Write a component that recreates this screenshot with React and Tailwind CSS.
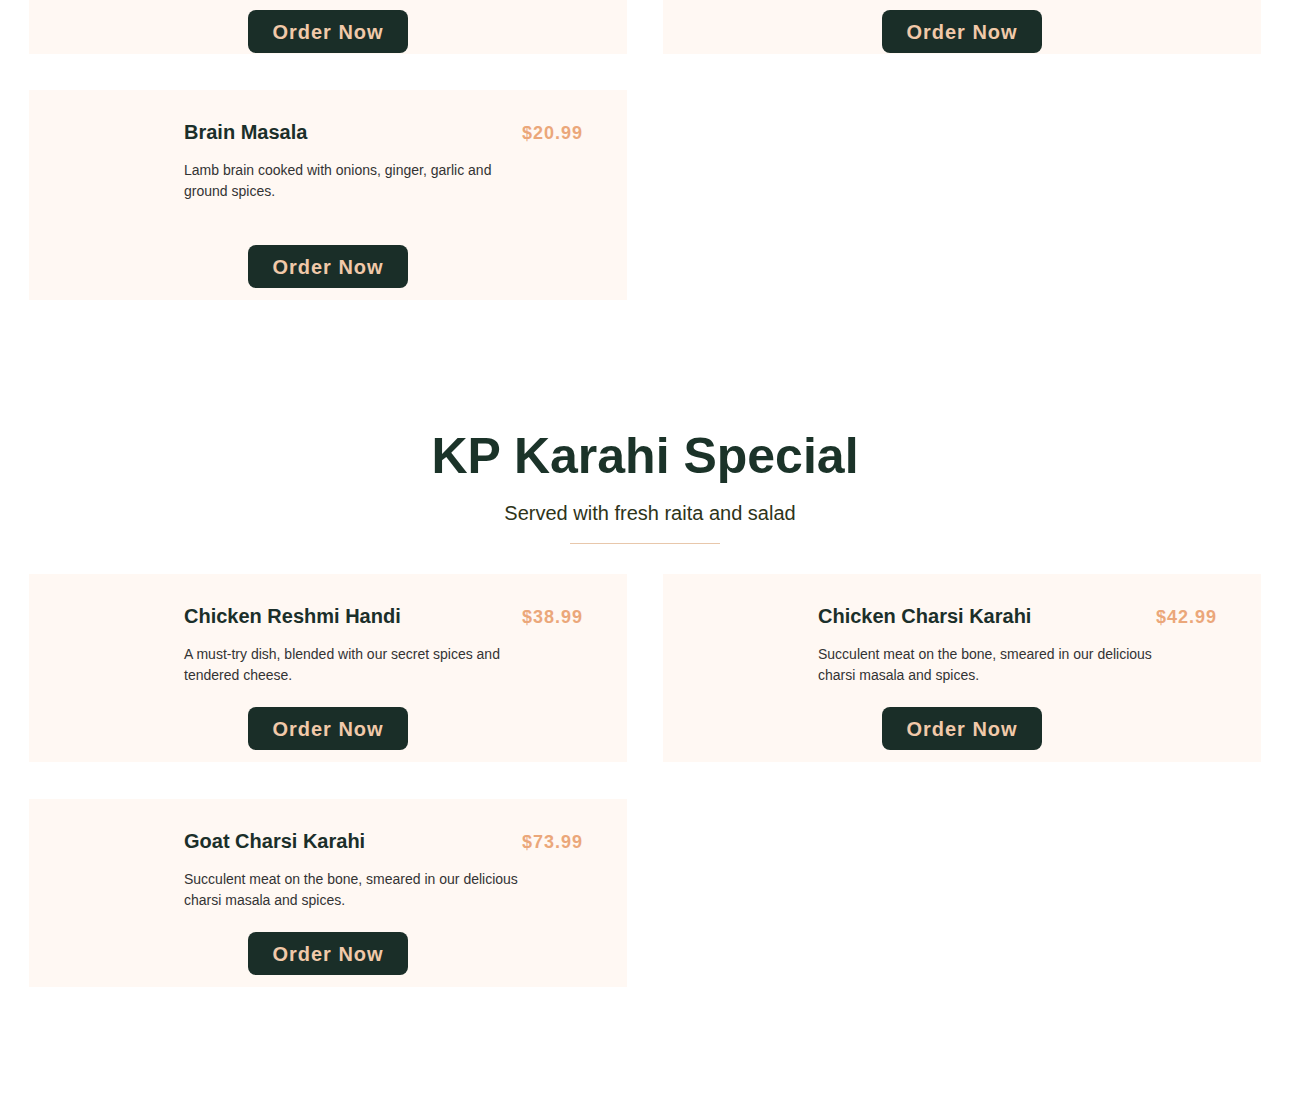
import React from "react";

const karahiItems = [
  {
    name: "Chicken Reshmi Handi",
    price: "$38.99",
    desc: "A must-try dish, blended with our secret spices and tendered cheese.",
  },
  {
    name: "Chicken Charsi Karahi",
    price: "$42.99",
    desc: "Succulent meat on the bone, smeared in our delicious charsi masala and spices.",
  },
  {
    name: "Goat Charsi Karahi",
    price: "$73.99",
    desc: "Succulent meat on the bone, smeared in our delicious charsi masala and spices.",
  },
];

function OrderButton() {
  return (
    <button className="mx-auto w-[160px] h-[43px] rounded-[8px] bg-[#1a2e28] text-[#f1c9a9] text-[20px] font-bold tracking-[1px] leading-none">
      Order Now
    </button>
  );
}

function MenuCard({ item, tall }) {
  return (
    <div
      className={
        "flex flex-col bg-[#fff8f3] pt-[28px] pb-[12px] " +
        (tall ? "min-h-[210px]" : "")
      }
    >
      <div className="flex-1 pl-[155px] pr-[44px]">
        <div className="flex items-baseline justify-between">
          <h3 className="text-[20px] leading-[28px] font-bold text-[#1b2f2a]">
            {item.name}
          </h3>
          <span className="mt-[1px] text-[18px] leading-[28px] font-bold tracking-[1px] text-[#eba77a]">
            {item.price}
          </span>
        </div>
        <p className="mt-[13px] w-[345px] text-[14px] leading-[21px] text-[#333333]">
          {item.desc}
        </p>
      </div>
      <div className="mt-[21px] flex">
        <OrderButton />
      </div>
    </div>
  );
}

export default function App() {
  return (
    <div
      className="bg-white min-h-[1119px] pl-[29px] pr-[49px]"
      style={{ fontFamily: '"Liberation Sans", Arial, sans-serif' }}
    >
      {/* tail of the previous section */}
      <div className="grid grid-cols-2 gap-[36px]">
        <div className="h-[54px] bg-[#fff8f3] pt-[10px] flex">
          <OrderButton />
        </div>
        <div className="h-[54px] bg-[#fff8f3] pt-[10px] flex">
          <OrderButton />
        </div>
        <MenuCard
          tall
          item={{
            name: "Brain Masala",
            price: "$20.99",
            desc: "Lamb brain cooked with onions, ginger, garlic and ground spices.",
          }}
        />
      </div>

      <section className="mt-[126px]">
        <h2 className="text-center text-[50px] leading-[60px] font-bold text-[#1b3329]">
          KP Karahi Special
        </h2>
        <p className="mt-[13px] text-center pl-[10px] text-[20px] leading-[28px] text-[#2e3419]">
          Served with fresh raita and salad
        </p>
        <div className="mx-auto mt-[16px] w-[150px] h-px bg-[#e8c7ab]"></div>

        <div className="mt-[30px] grid grid-cols-2 gap-x-[36px] gap-y-[37px]">
          {karahiItems.map((item, index) => (
            <MenuCard key={index} item={item} />
          ))}
        </div>
      </section>

      <div className="h-[140px]"></div>
    </div>
  );
}
